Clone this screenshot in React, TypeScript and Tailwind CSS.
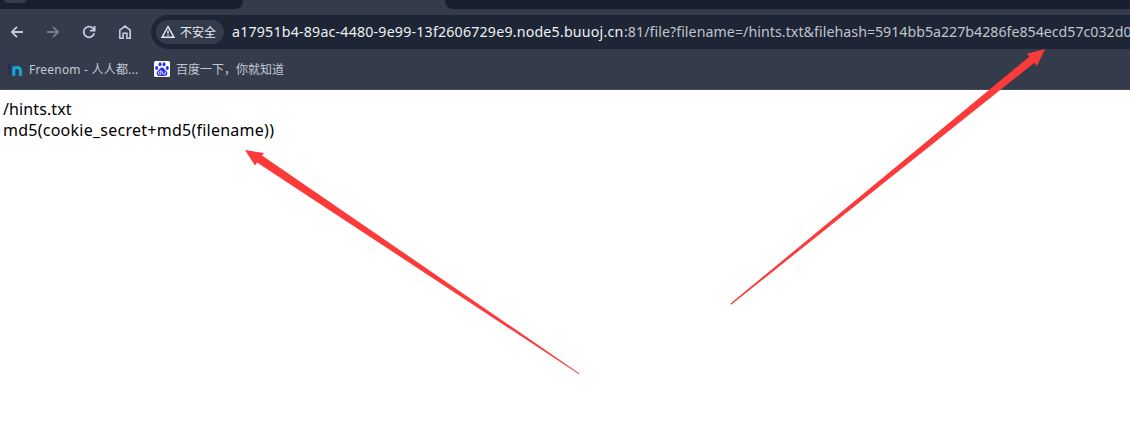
export default function App() {
  return (
    <div className="relative h-[429px] w-[1130px] overflow-hidden bg-white font-['Noto_Sans','Noto_Sans_CJK_SC',sans-serif]">
      <header className="h-[90px] border-b border-[#4a4e57] bg-[#343c4c]">
        <div className="flex h-[9px] justify-between">
          <div className="w-[243px] rounded-br-[8px] bg-[#182030] pl-1">
            <div className="h-[3px] w-[22px] rounded-b-[8px] bg-[#343c4c]" />
          </div>
          <div className="w-[685px] rounded-bl-[8px] bg-[#182030]" />
        </div>
        <nav className="mt-[6px] flex h-[34px] items-center">
          <div className="flex w-[151px] items-center gap-[20px] pl-[9px] text-[#c3cce0]">
            <svg className="size-4" viewBox="0 0 16 16" fill="none" stroke="currentColor" strokeWidth="1.8"><path d="M14 8H3M8 2.8 2.8 8 8 13.2" /></svg>
            <svg className="size-4 text-[#757d8d]" viewBox="0 0 16 16" fill="none" stroke="currentColor" strokeWidth="1.8"><path d="M2 8h11M8 2.8 13.2 8 8 13.2" /></svg>
            <svg className="size-4" viewBox="0 0 16 16" fill="none" stroke="currentColor" strokeWidth="1.8"><path d="M13.2 9.3A5.3 5.3 0 1 1 12 4.4L13.3 6M13.6 2v4.6H9" /></svg>
            <svg className="size-4" viewBox="0 0 16 16" fill="none" stroke="currentColor" strokeWidth="1.6"><path d="M2.8 14.200V6.200L8 2.100l5.200 4.100v8H9.900V9.200H6.100v5z" /></svg>
          </div>
          <div className="flex h-[34px] flex-1 items-center overflow-hidden rounded-l-full bg-[#1e2636] pl-[5px]">
            <div className="flex h-6 w-[68px] shrink-0 items-center rounded-full bg-[#343c4c] pl-[5px] text-[12px] text-[#e8ebf2]">
              <svg className="mr-[5px] size-[14px]" viewBox="0 0 14 14" fill="none" stroke="currentColor" strokeWidth="1.4"><path d="M7 1.6 13 12.3H1zM7 5.500v3.200M7 9.700v1.300" /></svg>
              <span className="pt-px">不安全</span>
            </div>
            <div className="flex pl-2 text-[14.200px] whitespace-nowrap text-[#c0c4cc]">
              <span className="w-[392px] tracking-[0.2px] text-[#eef0f4]">a17951b4-89ac-4480-9e99-13f2606729e9.node5.buuoj.cn</span>
              <span className="w-[251px] tracking-[0.06px]">:81/file?filename=/hints.txt&amp;filehash=</span>
              <span>5914bb5a227b4286fe854ecd57c032d0</span>
            </div>
          </div>
        </nav>
        <div className="flex h-[40px] items-center text-[12px] text-[#c3c8d2]">
          <svg className="mr-[6px] ml-[7px] size-4" viewBox="0 0 16 16" fill="none"><path d="M2.200 14.800V4.500Q2.200 2.600 5 2.600M.3 6.800h4.500" stroke="#252c60" strokeWidth="1.800" /><path d="M6.800 14.800V5.500M6.800 8.500Q7.300 6.500 10 6.500q3.400 0 3.400 3.200v5.100" stroke="#19a6df" strokeWidth="3" /></svg>
          <span className="w-[125px] pt-px tracking-[0.2px]">Freenom - 人人都...</span>
          <Baidu />
          <span className="ml-[6px] pt-px">百度一下，你就知道</span>
        </div>
      </header>
      <main className="px-[3px] pt-[9px] text-[16px] leading-[21px] text-black">
        <p className="tracking-[0.1px]">/hints.txt</p>
        <p className="tracking-[0.250px]">md5(cookie_secret+md5(filename))</p>
      </main>
      <svg className="pointer-events-none absolute inset-0" width="1130" height="429" fill="#fc3a3a">
        <path d="M245 150 264 153 262 155.500 579.500 373.400 579 374.300 257 162.500 255 165.500z" />
        <path d="M1045 49 1037 66 1034.300 62.800 731.200 304.800 730.300 303.700 1029.300 56.700 1027 53.700z" />
      </svg>
    </div>
  );
}

function Baidu() {
  return (
    <svg className="size-4" viewBox="0 0 16 16">
      <rect width="16" height="16" rx="1.500" fill="#fff" />
      <g fill="#2a2fe0">
        <ellipse cx="2.700" cy="7" rx="1.500" ry="2" />
        <ellipse cx="6" cy="3.300" rx="1.500" ry="2.100" />
        <ellipse cx="10" cy="3.300" rx="1.500" ry="2.100" />
        <ellipse cx="13.300" cy="7" rx="1.500" ry="2" />
        <path d="M8 6.500c1.800 0 2.200 1.600 3.500 2.800 1.700 1.500 2.200 2.700 1.600 4.200-.8 1.800-2.700 1.400-5.100 1.400s-4.300.4-5.100-1.400c-.6-1.500-.1-2.700 1.600-4.200C5.800 8.100 6.200 6.500 8 6.500z" />
      </g>
      <path d="M7 9v4.300H5.300q-1 0-1-1.300t1-1.300H7M8.700 10.500v1.700q0 1.100 1 1.100h1.600v-2.800" fill="none" stroke="#fff" strokeWidth=".8" />
    </svg>
  );
}
